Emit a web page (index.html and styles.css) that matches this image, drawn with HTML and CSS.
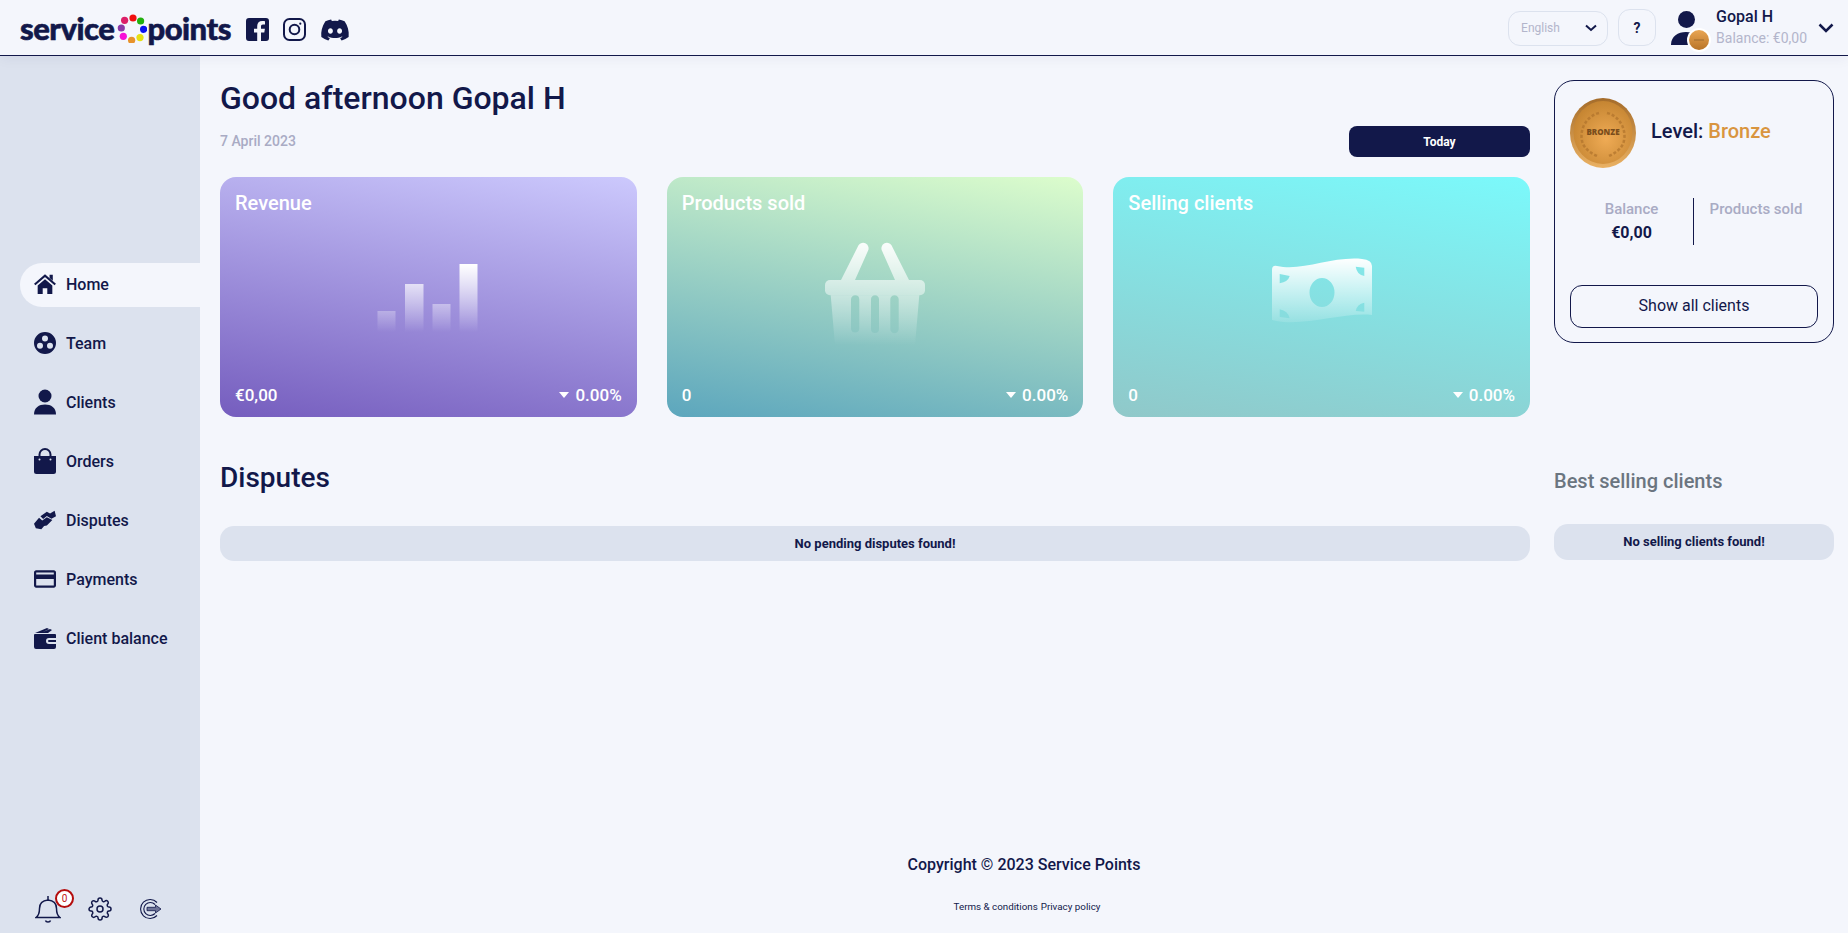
FILE: index.html
```html
<!DOCTYPE html>
<html lang="en">
<head>
  <meta charset="UTF-8">
  <meta name="viewport" content="width=device-width, initial-scale=1.0">
  <title>Service Points</title>
  <link rel="stylesheet" href="styles.css">
</head>
<body>
  <header class="topbar">
    <div class="brand">
      <span class="logo-word">service</span>
      <svg class="logo-dots" viewBox="0 0 30 30">
        <circle cx="16" cy="5" r="3.6" fill="#f00f0f"/>
        <circle cx="23.6" cy="8" r="3.6" fill="#22b00e"/>
        <circle cx="26.6" cy="16.3" r="3.6" fill="#0a10f0"/>
        <circle cx="23" cy="24.6" r="3.6" fill="#e6e012"/>
        <circle cx="14.6" cy="27.3" r="3.6" fill="#e8932c"/>
        <circle cx="6.3" cy="23.3" r="3.6" fill="#f80fd8"/>
        <circle cx="4.3" cy="15" r="3.6" fill="#8a3aa8"/>
        <circle cx="7.6" cy="7.3" r="3.6" fill="#dc1f68"/>
      </svg>
      <span class="logo-word points">points</span>
      <div class="socials">
        <svg class="social" width="23" height="23" viewBox="0 0 23 23"><path fill="#12184a" d="M3 0h17a3 3 0 0 1 3 3v17a3 3 0 0 1-3 3h-5v-8.500h3.300l.6-3.700h-3.900V8.500c0-1.100.5-1.900 2-1.900H19V3.300c-.8-.1-1.800-.3-2.800-.3-3 0-5 1.800-5 5.100v2.700H8v3.700h3.200V23H3a3 3 0 0 1-3-3V3a3 3 0 0 1 3-3z"/></svg>
        <svg class="social" width="23" height="23" viewBox="0 0 23 23" fill="none" stroke="#12184a" stroke-width="2"><rect x="1" y="1" width="21" height="21" rx="5.500"/><circle cx="11.500" cy="11.500" r="4.800"/><circle cx="17.300" cy="5.700" r="1.100" fill="#12184a" stroke="none"/></svg>
        <svg class="social" width="30" height="24" viewBox="0 0 640 512"><path fill="#12184a" d="M524.531,69.836a1.5,1.5,0,0,0-.764-.7A485.065,485.065,0,0,0,404.081,32.03a1.816,1.816,0,0,0-1.923.91,337.461,337.461,0,0,0-14.9,30.6,447.848,447.848,0,0,0-134.426,0,309.541,309.541,0,0,0-15.135-30.6,1.89,1.89,0,0,0-1.924-.91A483.689,483.689,0,0,0,116.085,69.137a1.712,1.712,0,0,0-.788.676C39.068,183.651,18.186,294.69,28.43,404.354a2.016,2.016,0,0,0,.765,1.375A487.666,487.666,0,0,0,176.02,479.918a1.9,1.9,0,0,0,2.063-.676A348.2,348.2,0,0,0,208.12,430.4a1.86,1.86,0,0,0-1.019-2.588,321.173,321.173,0,0,1-45.868-21.853,1.885,1.885,0,0,1-.185-3.126c3.082-2.309,6.166-4.711,9.109-7.137a1.819,1.819,0,0,1,1.9-.256c96.229,43.917,200.41,43.917,295.5,0a1.812,1.812,0,0,1,1.924.233c2.944,2.426,6.027,4.851,9.132,7.16a1.884,1.884,0,0,1-.162,3.126,301.407,301.407,0,0,1-45.89,21.83,1.875,1.875,0,0,0-1,2.611,391.055,391.055,0,0,0,30.014,48.815,1.864,1.864,0,0,0,2.063.7A486.048,486.048,0,0,0,610.7,405.729a1.882,1.882,0,0,0,.765-1.352C623.729,277.594,590.933,167.465,524.531,69.836ZM222.491,337.58c-28.972,0-52.844-26.587-52.844-59.239S193.056,219.1,222.491,219.1c29.665,0,53.306,26.82,52.843,59.239C275.334,310.993,251.924,337.58,222.491,337.58Zm195.38,0c-28.971,0-52.843-26.587-52.843-59.239S388.437,219.1,417.871,219.1c29.667,0,53.307,26.82,52.844,59.239C470.715,310.993,447.538,337.58,417.871,337.58Z"/></svg>
      </div>
    </div>
    <div class="top-actions">
      <div class="lang-select">
        <span>English</span>
        <svg width="12" height="8" viewBox="0 0 12 8" fill="none" stroke="#12184a" stroke-width="2"><path d="M1 1.500l5 4.500 5-4.500"/></svg>
      </div>
      <button class="help-btn">?</button>
      <div class="user-avatar">
        <svg width="30" height="34" viewBox="0 0 30 34"><circle cx="15.500" cy="8.500" r="8.500" fill="#12184a"/><path fill="#12184a" d="M0 34c0-9 7-13 15-13s15 4 15 13z"/></svg>
        <svg class="user-medal" width="24" height="24" viewBox="0 0 24 24">
          <defs><linearGradient id="m1" x1="0" y1="0" x2="0" y2="1"><stop offset="0" stop-color="#e9a654"/><stop offset="1" stop-color="#b87427"/></linearGradient></defs>
          <circle cx="12" cy="12" r="12" fill="#fff"/>
          <circle cx="12" cy="12" r="10" fill="url(#m1)"/>
          <rect x="7" y="11.500" width="10" height="1" fill="#9c6a2e"/>
        </svg>
      </div>
      <div class="user-info">
        <div class="user-name">Gopal H</div>
        <div class="user-balance">Balance: €0,00</div>
      </div>
      <svg class="user-caret" width="16" height="10" viewBox="0 0 16 10" fill="none" stroke="#12184a" stroke-width="2.500"><path d="M1.500 1.500l6.500 6.500 6.500-6.500"/></svg>
    </div>
  </header>

  <div class="layout">
    <aside class="sidebar">
      <nav class="nav">
        <a class="nav-item active">
          <svg class="nav-icon" viewBox="0 0 24 22"><path fill="#12184a" d="M4 12.500l8-6.800 8 6.800V22h-5.500v-6.500h-5V22H4z"/><path fill="none" stroke="#12184a" stroke-width="2.300" d="M.8 11.500L12 2l11.200 9.500"/><path fill="#12184a" d="M17 1h3.500v6.500L17 4.500z"/></svg>
          Home
        </a>
        <a class="nav-item">
          <svg class="nav-icon" viewBox="1 1 22 22"><path fill="#12184a" fill-rule="evenodd" d="M12 1a11 11 0 1 1 0 22 11 11 0 0 1 0-22zm0 3.500a3 3 0 1 0 0 6 3 3 0 0 0 0-6zm-5 7.200a3 3 0 1 0 0 6 3 3 0 0 0 0-6zm10 0a3 3 0 1 0 0 6 3 3 0 0 0 0-6z"/></svg>
          Team
        </a>
        <a class="nav-item">
          <svg class="nav-icon" viewBox="1 0 22 26"><circle cx="12" cy="7" r="6.500" fill="#12184a"/><path fill="#12184a" d="M1 25.500c0-7 5-10 11-10s11 3 11 10z"/></svg>
          Clients
        </a>
        <a class="nav-item">
          <svg class="nav-icon" viewBox="1 0 22 26"><path fill="#12184a" fill-rule="evenodd" d="M1 8h22v15.500a2.500 2.500 0 0 1-2.500 2.500h-17A2.500 2.500 0 0 1 1 23.500zm5.500 2.500a1 1 0 1 0 0 2 1 1 0 0 0 0-2zm11 0a1 1 0 1 0 0 2 1 1 0 0 0 0-2z"/><path fill="none" stroke="#12184a" stroke-width="2" d="M6.500 8V6.500a5.500 5.500 0 0 1 11 0V8"/></svg>
          Orders
        </a>
        <a class="nav-item">
          <svg class="nav-icon" viewBox="0 0 24 20"><path fill="#12184a" d="M7 6l7-5 3.500 2 5-3L24 6l-5 2.500-5-3-4 3.500zM0 14l5.500-6.500L9 10.500 14 7l6 3-6 6-3 .5-3 3.500-6-1z"/></svg>
          Disputes
        </a>
        <a class="nav-item">
          <svg class="nav-icon" viewBox="2 4 20 16"><path fill="#12184a" d="M20 4H4c-1.110 0-1.990.89-1.990 2L2 18c0 1.110.89 2 2 2h16c1.110 0 2-.89 2-2V6c0-1.110-.89-2-2-2zm0 14H4v-6h16v6zm0-10H4V6h16v2z"/></svg>
          Payments
        </a>
        <a class="nav-item">
          <svg class="nav-icon" viewBox="1 0 22 22"><path fill="#12184a" fill-rule="evenodd" d="M2 7h20a1 1 0 0 1 1 1v3h-7a3 3 0 0 0 0 6h7v3a2 2 0 0 1-2 2H3a2 2 0 0 1-2-2V8a1 1 0 0 1 1-1zm14 6h7v2h-7a1 1 0 0 1 0-2z"/><path fill="#12184a" d="M2 6l12-5 2 1-6 3 7-3 2 1-4 3z"/></svg>
          Client balance
        </a>
      </nav>
      <div class="side-tools">
        <div class="bell">
          <svg width="26" height="30" viewBox="0 0 26 30" fill="none" stroke="#12184a" stroke-width="1.500"><path d="M1 23.500c3-2 3.500-5 3.500-9 0-5 3-8 8.500-8.500 5.500.5 8.500 3.500 8.500 8.500 0 4 .5 7 3.500 9z"/><path d="M13 2v4M10.500 26.500c.5 2 4.500 2 5 0"/></svg>
          <span class="bell-count">0</span>
        </div>
        <svg class="tool" width="24" height="24" viewBox="0 0 24 24" fill="none" stroke="#12184a" stroke-width="1.500"><path d="M12 15a3 3 0 1 0 0-6 3 3 0 0 0 0 6z"/><path d="M19.400 15a1.650 1.650 0 0 0 .33 1.820l.06.06a2 2 0 0 1 0 2.830 2 2 0 0 1-2.830 0l-.06-.06a1.650 1.650 0 0 0-1.820-.33 1.650 1.650 0 0 0-1 1.510V21a2 2 0 0 1-2 2 2 2 0 0 1-2-2v-.09A1.650 1.650 0 0 0 9 19.400a1.650 1.650 0 0 0-1.820.33l-.06.06a2 2 0 0 1-2.830 0 2 2 0 0 1 0-2.830l.06-.06a1.650 1.650 0 0 0 .33-1.820 1.650 1.650 0 0 0-1.510-1H3a2 2 0 0 1-2-2 2 2 0 0 1 2-2h.09A1.650 1.650 0 0 0 4.600 9a1.650 1.650 0 0 0-.33-1.820l-.06-.06a2 2 0 0 1 0-2.830 2 2 0 0 1 2.830 0l.06.06a1.650 1.650 0 0 0 1.820.33H9a1.650 1.650 0 0 0 1-1.510V3a2 2 0 0 1 2-2 2 2 0 0 1 2 2v.09a1.650 1.650 0 0 0 1 1.510 1.650 1.650 0 0 0 1.820-.33l.06-.06a2 2 0 0 1 2.830 0 2 2 0 0 1 0 2.830l-.06.06a1.650 1.650 0 0 0-.33 1.820V9a1.650 1.650 0 0 0 1.510 1H21a2 2 0 0 1 2 2 2 2 0 0 1-2 2h-.09a1.650 1.650 0 0 0-1.510 1z"/></svg>
        <svg class="tool" width="22" height="22" viewBox="0 0 22 22" fill="none" stroke="#12184a" stroke-width="1.100"><path d="M17 4.500A9.500 9.500 0 1 0 17 17.500"/><path d="M15 6.500A6.500 6.500 0 1 0 15 15.500"/><path fill="#6f7498" stroke-width=".8" d="M7 9.300h8.500V7l5.500 4-5.500 4v-2.300H7z"/></svg>
      </div>
    </aside>

    <main class="main">
      <div class="columns">
        <section class="col-left">
          <h1 class="greeting">Good afternoon Gopal H</h1>
          <div class="date-row">
            <span class="date">7 April 2023</span>
            <button class="today-btn">Today</button>
          </div>
          <div class="stat-cards">
            <article class="stat-card revenue">
              <h3>Revenue</h3>
              <div class="stat-art">
                <svg width="120" height="110" viewBox="0 0 120 110">
                  <defs><linearGradient id="fade1" gradientUnits="userSpaceOnUse" x1="0" y1="20" x2="0" y2="88"><stop offset="0" stop-color="#fff"/><stop offset="1" stop-color="#fff" stop-opacity="0"/></linearGradient></defs>
                  <g fill="url(#fade1)">
                    <rect x="9.500" y="67" width="18" height="21"/>
                    <rect x="37" y="40" width="18.500" height="48"/>
                    <rect x="64.500" y="60" width="18" height="28"/>
                    <rect x="91.500" y="20" width="18" height="68"/>
                  </g>
                </svg>
              </div>
              <div class="stat-foot"><span>€0,00</span><span class="stat-change"><i class="caret"></i>0.00%</span></div>
            </article>
            <article class="stat-card products">
              <h3>Products sold</h3>
              <div class="stat-art">
                <svg width="120" height="110" viewBox="0 2 120 110">
                  <defs><linearGradient id="fade2" gradientUnits="userSpaceOnUse" x1="0" y1="0" x2="0" y2="103"><stop offset="0" stop-color="#fff" stop-opacity=".95"/><stop offset="1" stop-color="#fff" stop-opacity="0"/></linearGradient></defs>
                  <g fill="url(#fade2)">
                    <path d="M43.500 3.300a5.500 5.500 0 0 1 9.500 5.500L40 38H26z"/>
                    <path d="M76.500 3.300a5.500 5.500 0 0 0-9.500 5.500L80 38H94z"/>
                    <rect x="10" y="38" width="100" height="15.300" rx="5"/>
                    <path fill-rule="evenodd" d="M15.700 53.300h88.600L100 103H20zM40.200 53.300a4.200 4.200 0 0 0-4.200 4.200V87a4.200 4.200 0 0 0 8.300 0V57.500a4.200 4.200 0 0 0-4.100-4.200zm19.800 0a4 4 0 0 0-4 4.200V87a4 4 0 0 0 8 0V57.500a4 4 0 0 0-4-4.200zm19.500 0a4.200 4.200 0 0 0-4.200 4.200V87a4.200 4.200 0 0 0 8.400 0V57.500a4.200 4.200 0 0 0-4.200-4.200z"/>
                  </g>
                </svg>
              </div>
              <div class="stat-foot"><span>0</span><span class="stat-change"><i class="caret"></i>0.00%</span></div>
            </article>
            <article class="stat-card clients">
              <h3>Selling clients</h3>
              <div class="stat-art">
                <svg width="120" height="110" viewBox="0 0 120 110">
                  <defs><linearGradient id="fade3" gradientUnits="userSpaceOnUse" x1="0" y1="14" x2="0" y2="80"><stop offset="0" stop-color="#fff"/><stop offset="1" stop-color="#fff" stop-opacity=".1"/></linearGradient></defs>
                  <path fill="url(#fade3)" fill-rule="evenodd" d="M10 26Q10 21 15 22C40 28 70 12 100 15Q110 16 110 22V71C80 68 40 84 10 76ZM60 34a12.500 14.500 0 1 0 0 29 12.500 14.500 0 0 0 0-29zM17.700 30L27.700 32Q26 38 17.700 39.300ZM93.700 22.700L102.300 23.700V32Q95 31 93.700 22.700ZM102.300 58.700V67.700L93.700 67Q95 60 102.300 58.700ZM17.700 65.300Q26 67 27.700 74.300L17.700 73Z"/>
                </svg>
              </div>
              <div class="stat-foot"><span>0</span><span class="stat-change"><i class="caret"></i>0.00%</span></div>
            </article>
          </div>
          <h2 class="section-title">Disputes</h2>
          <div class="empty-bar">No pending disputes found!</div>
        </section>

        <section class="col-right">
          <div class="level-card">
            <div class="level-head">
              <svg class="medal" width="66" height="70" viewBox="0 0 66 70">
                <defs>
                  <linearGradient id="rim" x1="0" y1="0" x2="0" y2="1"><stop offset="0" stop-color="#a56c2a"/><stop offset="1" stop-color="#eab163"/></linearGradient>
                  <radialGradient id="face" cx=".55" cy=".6" r=".65"><stop offset="0" stop-color="#efab55"/><stop offset="1" stop-color="#c2822f"/></radialGradient>
                </defs>
                <ellipse cx="33" cy="35" rx="33" ry="35" fill="url(#rim)"/>
                <ellipse cx="33" cy="34.500" rx="29.500" ry="31.500" fill="url(#face)"/>
                <g fill="none" stroke="#b0732c" stroke-width="2.500" stroke-dasharray="3 2" opacity=".7">
                  <path d="M29 15C16 18 8 33 13 46c3 6 8 9 14 12"/>
                  <path d="M37 15c13 3 21 18 16 31-3 6-8 9-14 12"/>
                </g>
                <text x="33" y="37" text-anchor="middle" class="medal-text">BRONZE</text>
              </svg>
              <div class="level-label">Level: <span class="level-name">Bronze</span></div>
            </div>
            <div class="level-stats">
              <div class="level-stat first">
                <div class="level-stat-label">Balance</div>
                <div class="level-stat-value">€0,00</div>
              </div>
              <div class="level-stat">
                <div class="level-stat-label">Products sold</div>
              </div>
            </div>
            <button class="outline-btn">Show all clients</button>
          </div>
          <h2 class="side-title">Best selling clients</h2>
          <div class="empty-bar side">No selling clients found!</div>
        </section>
      </div>

      <footer class="footer">
        <div class="copyright">Copyright © 2023 Service Points</div>
        <div class="footer-links"><a>Terms &amp; conditions</a><a>Privacy policy</a></div>
      </footer>
    </main>
  </div>
</body>
</html>
```

FILE: styles.css
```css
* {
  box-sizing: border-box;
}
html, body {
  height: 100%;
}
body {
  margin: 0;
  display: flex;
  flex-direction: column;
  height: 933px;
  overflow: hidden;
  font-family: Roboto, "Noto Sans", sans-serif;
  color: #12184a;
  background-color: #f4f6fc;
}
button {
  font-family: inherit;
  color: inherit;
  cursor: pointer;
}

/* top bar */
.topbar {
  position: relative;
  z-index: 2;
  flex: 0 0 56px;
  display: flex;
  align-items: center;
  justify-content: space-between;
  padding: 0 14px 0 20px;
  background-color: #f4f6fc;
  border-bottom: 1.5px solid #12184a;
  box-shadow: 0 3px 12px rgba(18, 24, 74, 0.05);
}
.brand {
  display: flex;
  align-items: center;
}
.logo-word {
  font-family: Lato, sans-serif;
  font-weight: 900;
  font-size: 31px;
  line-height: 36px;
  letter-spacing: -0.5px;
  -webkit-text-stroke: 0.6px #12184a;
}
.logo-dots {
  width: 30px;
  height: 30px;
  margin-left: 3px;
}
.socials {
  display: flex;
  align-items: center;
  gap: 14px;
  margin-left: 15px;
  padding-top: 4px;
}
.top-actions {
  display: flex;
  align-items: center;
}
.lang-select {
  width: 100px;
  height: 35px;
  margin-top: 1px;
  padding: 0 10px 0 12px;
  display: flex;
  align-items: center;
  justify-content: space-between;
  border: 1px solid #dce2ee;
  border-radius: 12px;
  font-size: 12px;
  color: #b3b5cb;
}
.help-btn {
  width: 38px;
  height: 37px;
  margin-left: 10px;
  padding: 0;
  background: none;
  border: 1px solid #dce2ee;
  border-radius: 12px;
  font-size: 14px;
  font-weight: 700;
}
.user-avatar {
  position: relative;
  width: 30px;
  height: 34px;
  margin-left: 15px;
  margin-right: 15px;
}
.user-medal {
  position: absolute;
  left: 16px;
  top: 17px;
}
.user-info {
  line-height: 20px;
}
.user-name {
  margin-top: -1px;
  font-size: 16px;
  font-weight: 500;
}
.user-balance {
  margin-top: 1px;
  font-size: 14px;
  color: #b3b5cb;
}
.user-caret {
  margin-left: 11px;
}

/* page layout */
.layout {
  flex: 1;
  display: flex;
  min-height: 0;
}
.sidebar {
  flex: 0 0 200px;
  display: flex;
  flex-direction: column;
  padding: 207px 0 9px 20px;
  background-color: #dce2ee;
}
.nav {
  display: flex;
  flex-direction: column;
  gap: 15px;
}
.nav-item {
  height: 44px;
  display: flex;
  align-items: center;
  gap: 10px;
  padding: 0 0 2px 14px;
  border-radius: 22px 0 0 22px;
  font-size: 16px;
  font-weight: 500;
}
.nav-item.active {
  background-color: #f4f6fc;
}
.nav-icon {
  width: 22px;
  height: 26px;
}
.side-tools {
  margin-top: auto;
  display: flex;
  align-items: center;
  gap: 27px;
  padding-left: 15px;
}
.tool:last-child {
  margin-left: 1px;
}
.bell {
  position: relative;
  width: 26px;
  height: 30px;
}
.bell-count {
  position: absolute;
  left: 20px;
  top: -5px;
  width: 19px;
  height: 19px;
  line-height: 15px;
  text-align: center;
  background: #fff;
  border: 2px solid #b40d0d;
  border-radius: 50%;
  font-size: 10px;
  color: #c01515;
}
.main {
  flex: 1;
  display: flex;
  flex-direction: column;
  padding: 24px 14px 19px 20px;
}
.columns {
  display: flex;
  gap: 24px;
}
.col-left {
  flex: 1;
}
.col-right {
  flex: 0 0 280px;
}

/* greeting */
.greeting {
  margin: 0;
  font-size: 32px;
  line-height: 36px;
  font-weight: 500;
}
.date-row {
  display: flex;
  align-items: center;
  justify-content: space-between;
  margin: 10px 0 20px;
}
.date {
  padding-bottom: 2px;
  font-size: 14px;
  font-weight: 500;
  color: #a9abc4;
}
.today-btn {
  width: 181px;
  height: 31px;
  padding: 0;
  background-color: #12184a;
  border: none;
  border-radius: 8px;
  color: #fff;
  font-size: 12px;
  font-weight: 700;
}

/* stat cards */
.stat-cards {
  display: grid;
  grid-template-columns: repeat(3, 1fr);
  gap: 30px;
}
.stat-card {
  height: 240px;
  display: flex;
  flex-direction: column;
  padding: 14px 15px 10px;
  border-radius: 16px;
  color: #fff;
}
.stat-card.revenue {
  background: linear-gradient(190deg, #ccc9fd 0%, #755dbe 100%);
}
.stat-card.products {
  background: linear-gradient(190deg, #dcfdcc 0%, #5ca6bd 100%);
}
.stat-card.clients {
  background: linear-gradient(190deg, #7bf9fb 0%, #90c8c9 100%);
}
.stat-card h3 {
  margin: 0;
  font-size: 20px;
  line-height: 24px;
  font-weight: 500;
}
.stat-art {
  flex: 1;
  display: flex;
  align-items: center;
  justify-content: center;
}
.stat-art svg {
  display: block;
  overflow: visible;
}
.stat-foot {
  display: flex;
  align-items: center;
  justify-content: space-between;
  height: 24px;
  font-size: 17px;
  font-weight: 500;
}
.stat-change {
  display: flex;
  align-items: center;
}
.caret {
  width: 0;
  height: 0;
  margin-right: 6px;
  border-left: 5.5px solid transparent;
  border-right: 5.5px solid transparent;
  border-top: 6px solid #fff;
}

/* sections */
.section-title {
  margin: 44px 0 31px;
  font-size: 28px;
  line-height: 34px;
  font-weight: 500;
}
.empty-bar {
  height: 35px;
  line-height: 35px;
  text-align: center;
  background-color: #dce2ee;
  border-radius: 14px;
  font-size: 13px;
  font-weight: 700;
}
.empty-bar.side {
  height: 36px;
  line-height: 36px;
}

/* right column */
.level-card {
  height: 263px;
  padding: 17px 15px 14px;
  border: 1px solid #12184a;
  border-radius: 20px;
}
.level-head {
  display: flex;
  align-items: center;
  gap: 15px;
}
.medal {
  flex-shrink: 0;
}
.medal-text {
  font-family: "Open Sans", sans-serif;
  font-size: 8px;
  font-weight: 800;
  fill: #7a4d1c;
}
.level-label {
  margin-bottom: 4px;
  font-size: 20px;
  font-weight: 500;
}
.level-name {
  color: #d9953f;
}
.level-stats {
  display: grid;
  grid-template-columns: 1fr 1fr;
  height: 47px;
  margin-top: 30px;
  text-align: center;
}
.level-stat.first {
  border-right: 1px solid #12184a;
}
.level-stat-label {
  font-size: 15px;
  line-height: 22px;
  font-weight: 500;
  color: #a9abc4;
}
.level-stat-value {
  margin-top: 1px;
  font-size: 16px;
  line-height: 24px;
  font-weight: 700;
}
.outline-btn {
  display: block;
  width: 100%;
  height: 43px;
  margin-top: 40px;
  padding: 0 0 2px;
  background: none;
  border: 1px solid #12184a;
  border-radius: 12px;
  font-size: 16px;
}
.side-title {
  margin: 126px 0 31px;
  font-size: 20px;
  line-height: 24px;
  font-weight: 500;
  color: #6b7580;
}

/* footer */
.footer {
  margin: auto 6px 0 0;
  text-align: center;
}
.copyright {
  font-size: 16px;
  line-height: 20px;
  font-weight: 500;
}
.footer-links {
  display: flex;
  justify-content: center;
  gap: 3px;
  margin-top: 25px;
  padding-left: 6px;
  font-size: 9.8px;
  line-height: 14px;
}
```
